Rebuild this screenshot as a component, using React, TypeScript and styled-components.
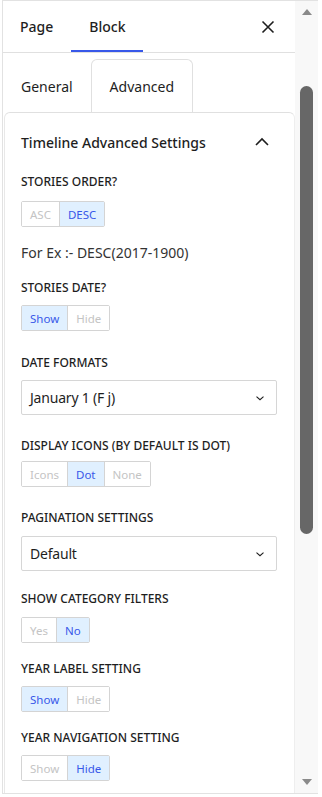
import React from "react";
import styled, { createGlobalStyle } from "styled-components";

const Global = createGlobalStyle`
  html, body { margin: 0; padding: 0; background: #fff; }
  body { font-family: "Noto Sans", "Open Sans", sans-serif; color: #1e1e1e; }
  * { box-sizing: border-box; }
`;

const Frame = styled.div`
  width: 322px;
  height: 797px;
  display: flex;
  overflow: hidden;
`;

const Outer = styled.div`
  margin-left: 2px;
  width: 316px;
  height: 794px;
  border-top: 1px solid #e2e2e2;
  border-left: 1px solid #e2e2e2;
  border-bottom: 1px solid #e2e2e2;
  display: flex;
`;

const Content = styled.div`
  flex: 1;
  min-width: 0;
  overflow: hidden;
  display: flex;
  flex-direction: column;
`;

const TopTabs = styled.div`
  height: 52px;
  display: flex;
  align-items: stretch;
  border-bottom: 1px solid #e0e0e0;
  padding-right: 10px;
`;

const TopTab = styled.div<{ $active?: boolean }>`
  padding: 0 18px 0 18px;
  display: flex;
  align-items: center;
  font-size: 14px;
  font-weight: 500;
  color: #1e1e1e;
  box-shadow: ${(p) => (p.$active ? "inset 0 -2px 0 #3858e9" : "none")};
  &:first-child {
    padding-left: 17px;
  }
`;

const Spacer = styled.div`
  flex: 1;
`;

const CloseBtn = styled.div`
  display: flex;
  align-items: center;
  padding-right: 5px;
`;

const SubTabs = styled.div`
  height: 59px;
  display: flex;
  align-items: flex-end;
`;

const SubTab = styled.div<{ $active?: boolean }>`
  height: 53px;
  padding: 0 18px;
  display: flex;
  align-items: center;
  font-size: 14px;
  color: #1e1e1e;
  border: 1px solid ${(p) => (p.$active ? "#e0e0e0" : "transparent")};
  border-bottom: none;
  border-radius: 6px 6px 0 0;
  &:first-child {
    padding: 0 17px 0 17px;
  }
`;

const Panel = styled.div`
  flex: 1;
  margin-left: 1px;
  border-top: 1px solid #e0e0e0;
  border-left: 1px solid #e8e8e8;
  border-right: 1px solid #eeeeee;
  border-radius: 6px 6px 0 0;
  padding: 0 17px 0 16px;
`;

const PanelHeader = styled.div`
  height: 60px;
  display: flex;
  align-items: center;
  justify-content: space-between;
  padding-bottom: 2px;
  padding-right: 8px;
`;

const PanelTitle = styled.div`
  font-size: 14px;
  font-weight: 500;
  color: #1e1e1e;
`;

const Field = styled.div<{ $mt?: number }>`
  margin-top: ${(p) => p.$mt ?? 0}px;
  display: flex;
  flex-direction: column;
  align-items: flex-start;
`;

const Label = styled.div<{ $gap?: number }>`
  font-size: 12px;
  font-weight: 500;
  line-height: 16px;
  padding-top: 1px;
  text-transform: uppercase;
  color: #1e1e1e;
  margin-bottom: ${(p) => p.$gap ?? 9}px;
`;

const Group = styled.div`
  display: flex;
  border: 1px solid #d4d4d4;
  border-radius: 2px;
  height: 26px;
`;

const Seg = styled.div<{ $active?: boolean }>`
  padding: 0 8px;
  display: flex;
  align-items: center;
  font-size: 11.5px;
  color: ${(p) => (p.$active ? "#3858e9" : "#c4c4c4")};
  background: ${(p) => (p.$active ? "#e0f0ff" : "#fff")};
  & + & {
    border-left: 1px solid #d4d4d4;
  }
`;

const Hint = styled.div`
  font-size: 14px;
  line-height: 20px;
  color: #333;
  margin-top: 16px;
`;

const Select = styled.div`
  width: 256px;
  height: 35px;
  border: 1px solid #d6d6d6;
  border-radius: 2px;
  display: flex;
  align-items: center;
  justify-content: space-between;
  padding: 0 9px 0 8px;
  font-size: 14px;
  letter-spacing: -0.2px;
  color: #1e1e1e;
`;

const Scrollbar = styled.div`
  width: 23px;
  background: #f8f8f8;
  display: flex;
  flex-direction: column;
  align-items: center;
`;

const ArrowBox = styled.div`
  height: 22px;
  width: 100%;
  display: flex;
  align-items: center;
  justify-content: center;
`;

const Track = styled.div`
  flex: 1;
  width: 100%;
  display: flex;
  justify-content: center;
  padding-top: 63px;
`;

const Thumb = styled.div`
  width: 13px;
  height: 448px;
  border-radius: 7px;
  background: #676767;
  margin-left: -1px;
`;

const Chevron = ({ up }: { up?: boolean }) =>
  up ? (
    <svg width="14" height="14" viewBox="0 0 14 14" fill="none">
      <path d="M1 10L7 4l6 6" stroke="#1e1e1e" strokeWidth="1.6" />
    </svg>
  ) : (
    <svg width="14" height="14" viewBox="0 0 24 24" fill="none">
      <path d="M6 9.5l6 5.5 6-5.5" stroke="#1e1e1e" strokeWidth="1.8" />
    </svg>
  );

const SegGroup = ({ items, active }: { items: string[]; active: number }) => (
  <Group>
    {items.map((t, i) => (
      <Seg key={t} $active={i === active}>
        {t}
      </Seg>
    ))}
  </Group>
);

export default function App() {
  return (
    <>
      <Global />
      <Frame>
        <Outer>
          <Content>
            <TopTabs>
              <TopTab>Page</TopTab>
              <TopTab $active>Block</TopTab>
              <Spacer />
              <CloseBtn>
                <svg width="24" height="24" viewBox="0 0 24 24">
                  <path d="M6.5 6.5l11 11M17.5 6.5l-11 11" stroke="#1e1e1e" strokeWidth="1.6" />
                </svg>
              </CloseBtn>
            </TopTabs>
            <SubTabs>
              <SubTab>General</SubTab>
              <SubTab $active>Advanced</SubTab>
            </SubTabs>
            <Panel>
              <PanelHeader>
                <PanelTitle>Timeline Advanced Settings</PanelTitle>
                <Chevron up />
              </PanelHeader>
              <Field>
                <Label $gap={11}>Stories Order?</Label>
                <SegGroup items={["ASC", "DESC"]} active={1} />
              </Field>
              <Hint>For Ex :- DESC(2017-1900)</Hint>
              <Field $mt={16}>
                <Label>Stories Date?</Label>
                <SegGroup items={["Show", "Hide"]} active={0} />
              </Field>
              <Field $mt={23}>
                <Label>Date Formats</Label>
                <Select>
                  January 1 (F j)
                  <Chevron />
                </Select>
              </Field>
              <Field $mt={22}>
                <Label $gap={7}>Display Icons (By default is Dot)</Label>
                <SegGroup items={["Icons", "Dot", "None"]} active={1} />
              </Field>
              <Field $mt={22}>
                <Label $gap={10}>Pagination Settings</Label>
                <Select>
                  Default
                  <Chevron />
                </Select>
              </Field>
              <Field $mt={19}>
                <Label $gap={10}>Show Category Filters</Label>
                <SegGroup items={["Yes", "No"]} active={1} />
              </Field>
              <Field $mt={17}>
                <Label>Year Label Setting</Label>
                <SegGroup items={["Show", "Hide"]} active={0} />
              </Field>
              <Field $mt={17}>
                <Label>Year Navigation Setting</Label>
                <SegGroup items={["Show", "Hide"]} active={1} />
              </Field>
            </Panel>
          </Content>
          <Scrollbar>
            <ArrowBox>
              <svg width="10" height="6" viewBox="0 0 10 6">
                <path d="M0 6L5 0l5 6z" fill="#8a8a8a" />
              </svg>
            </ArrowBox>
            <Track>
              <Thumb />
            </Track>
            <ArrowBox>
              <svg width="10" height="6" viewBox="0 0 10 6">
                <path d="M0 0l5 6 5-6z" fill="#8a8a8a" />
              </svg>
            </ArrowBox>
          </Scrollbar>
        </Outer>
      </Frame>
    </>
  );
}
